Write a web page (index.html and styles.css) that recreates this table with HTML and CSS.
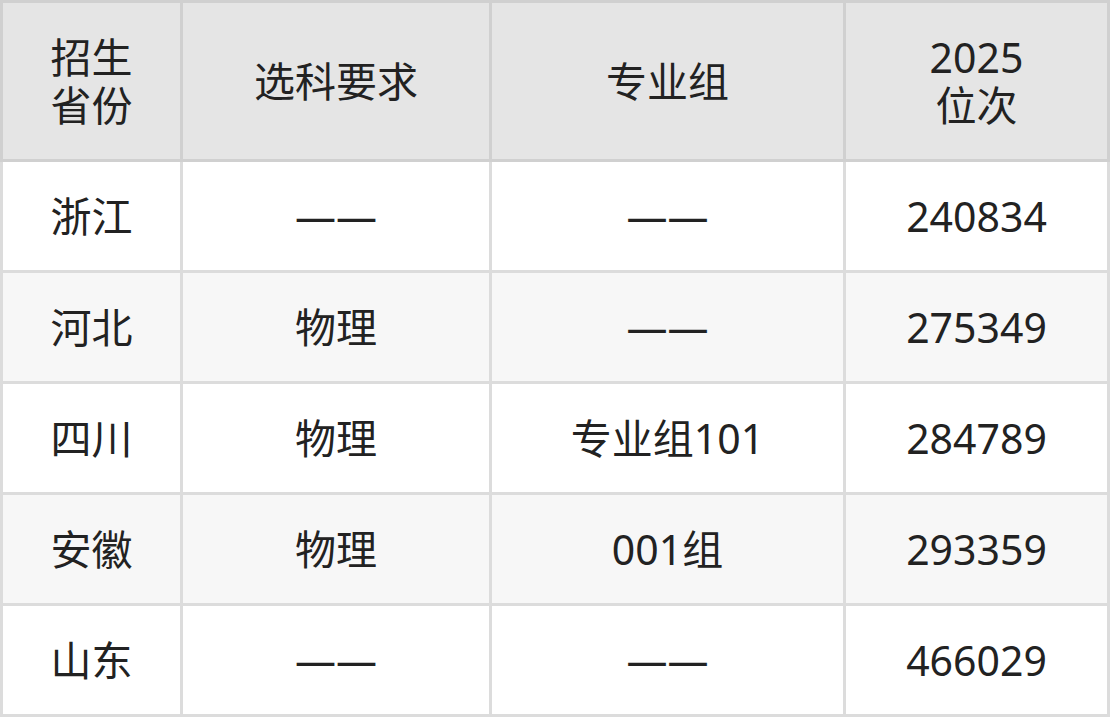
FILE: index.html
```html
<!DOCTYPE html>
<html lang="zh-CN">
<head>
<meta charset="utf-8">
<link rel="stylesheet" href="styles.css">
</head>
<body>
<table class="rank-table">
  <colgroup>
    <col class="c1"><col class="c2"><col class="c3"><col class="c4">
  </colgroup>
  <thead>
    <tr class="head-row">
      <th>招生<br>省份</th>
      <th>选科要求</th>
      <th>专业组</th>
      <th>2025<br>位次</th>
    </tr>
  </thead>
  <tbody>
    <tr class="row"><td>浙江</td><td>——</td><td>——</td><td>240834</td></tr>
    <tr class="row alt"><td>河北</td><td>物理</td><td>——</td><td>275349</td></tr>
    <tr class="row"><td>四川</td><td>物理</td><td>专业组101</td><td>284789</td></tr>
    <tr class="row alt"><td>安徽</td><td>物理</td><td>001组</td><td>293359</td></tr>
    <tr class="row"><td>山东</td><td>——</td><td>——</td><td>466029</td></tr>
  </tbody>
</table>
</body>
</html>
```
FILE: styles.css
```css
html, body {
  margin: 0;
  padding: 0;
  background: #ffffff;
}
.rank-table {
  border-collapse: collapse;
  table-layout: fixed;
  width: 1110px;
  font-family: "Noto Sans", "Noto Sans CJK SC", sans-serif;
  font-size: 41px;
  line-height: 48px;
  color: #222222;
}
.c1 { width: 180px; }
.c2 { width: 309px; }
.c3 { width: 354px; }
.c4 { width: 264px; }
.rank-table th,
.rank-table td {
  border: 3px solid #dcdcdc;
  text-align: center;
  vertical-align: middle;
  padding: 0;
  font-weight: 400;
}
.rank-table th {
  background: #e5e5e5;
  border-color: #d0d0d0;
}
.head-row { height: 159px; }
.row { height: 111px; }
.row.alt td { background: #f7f7f7; }
```
